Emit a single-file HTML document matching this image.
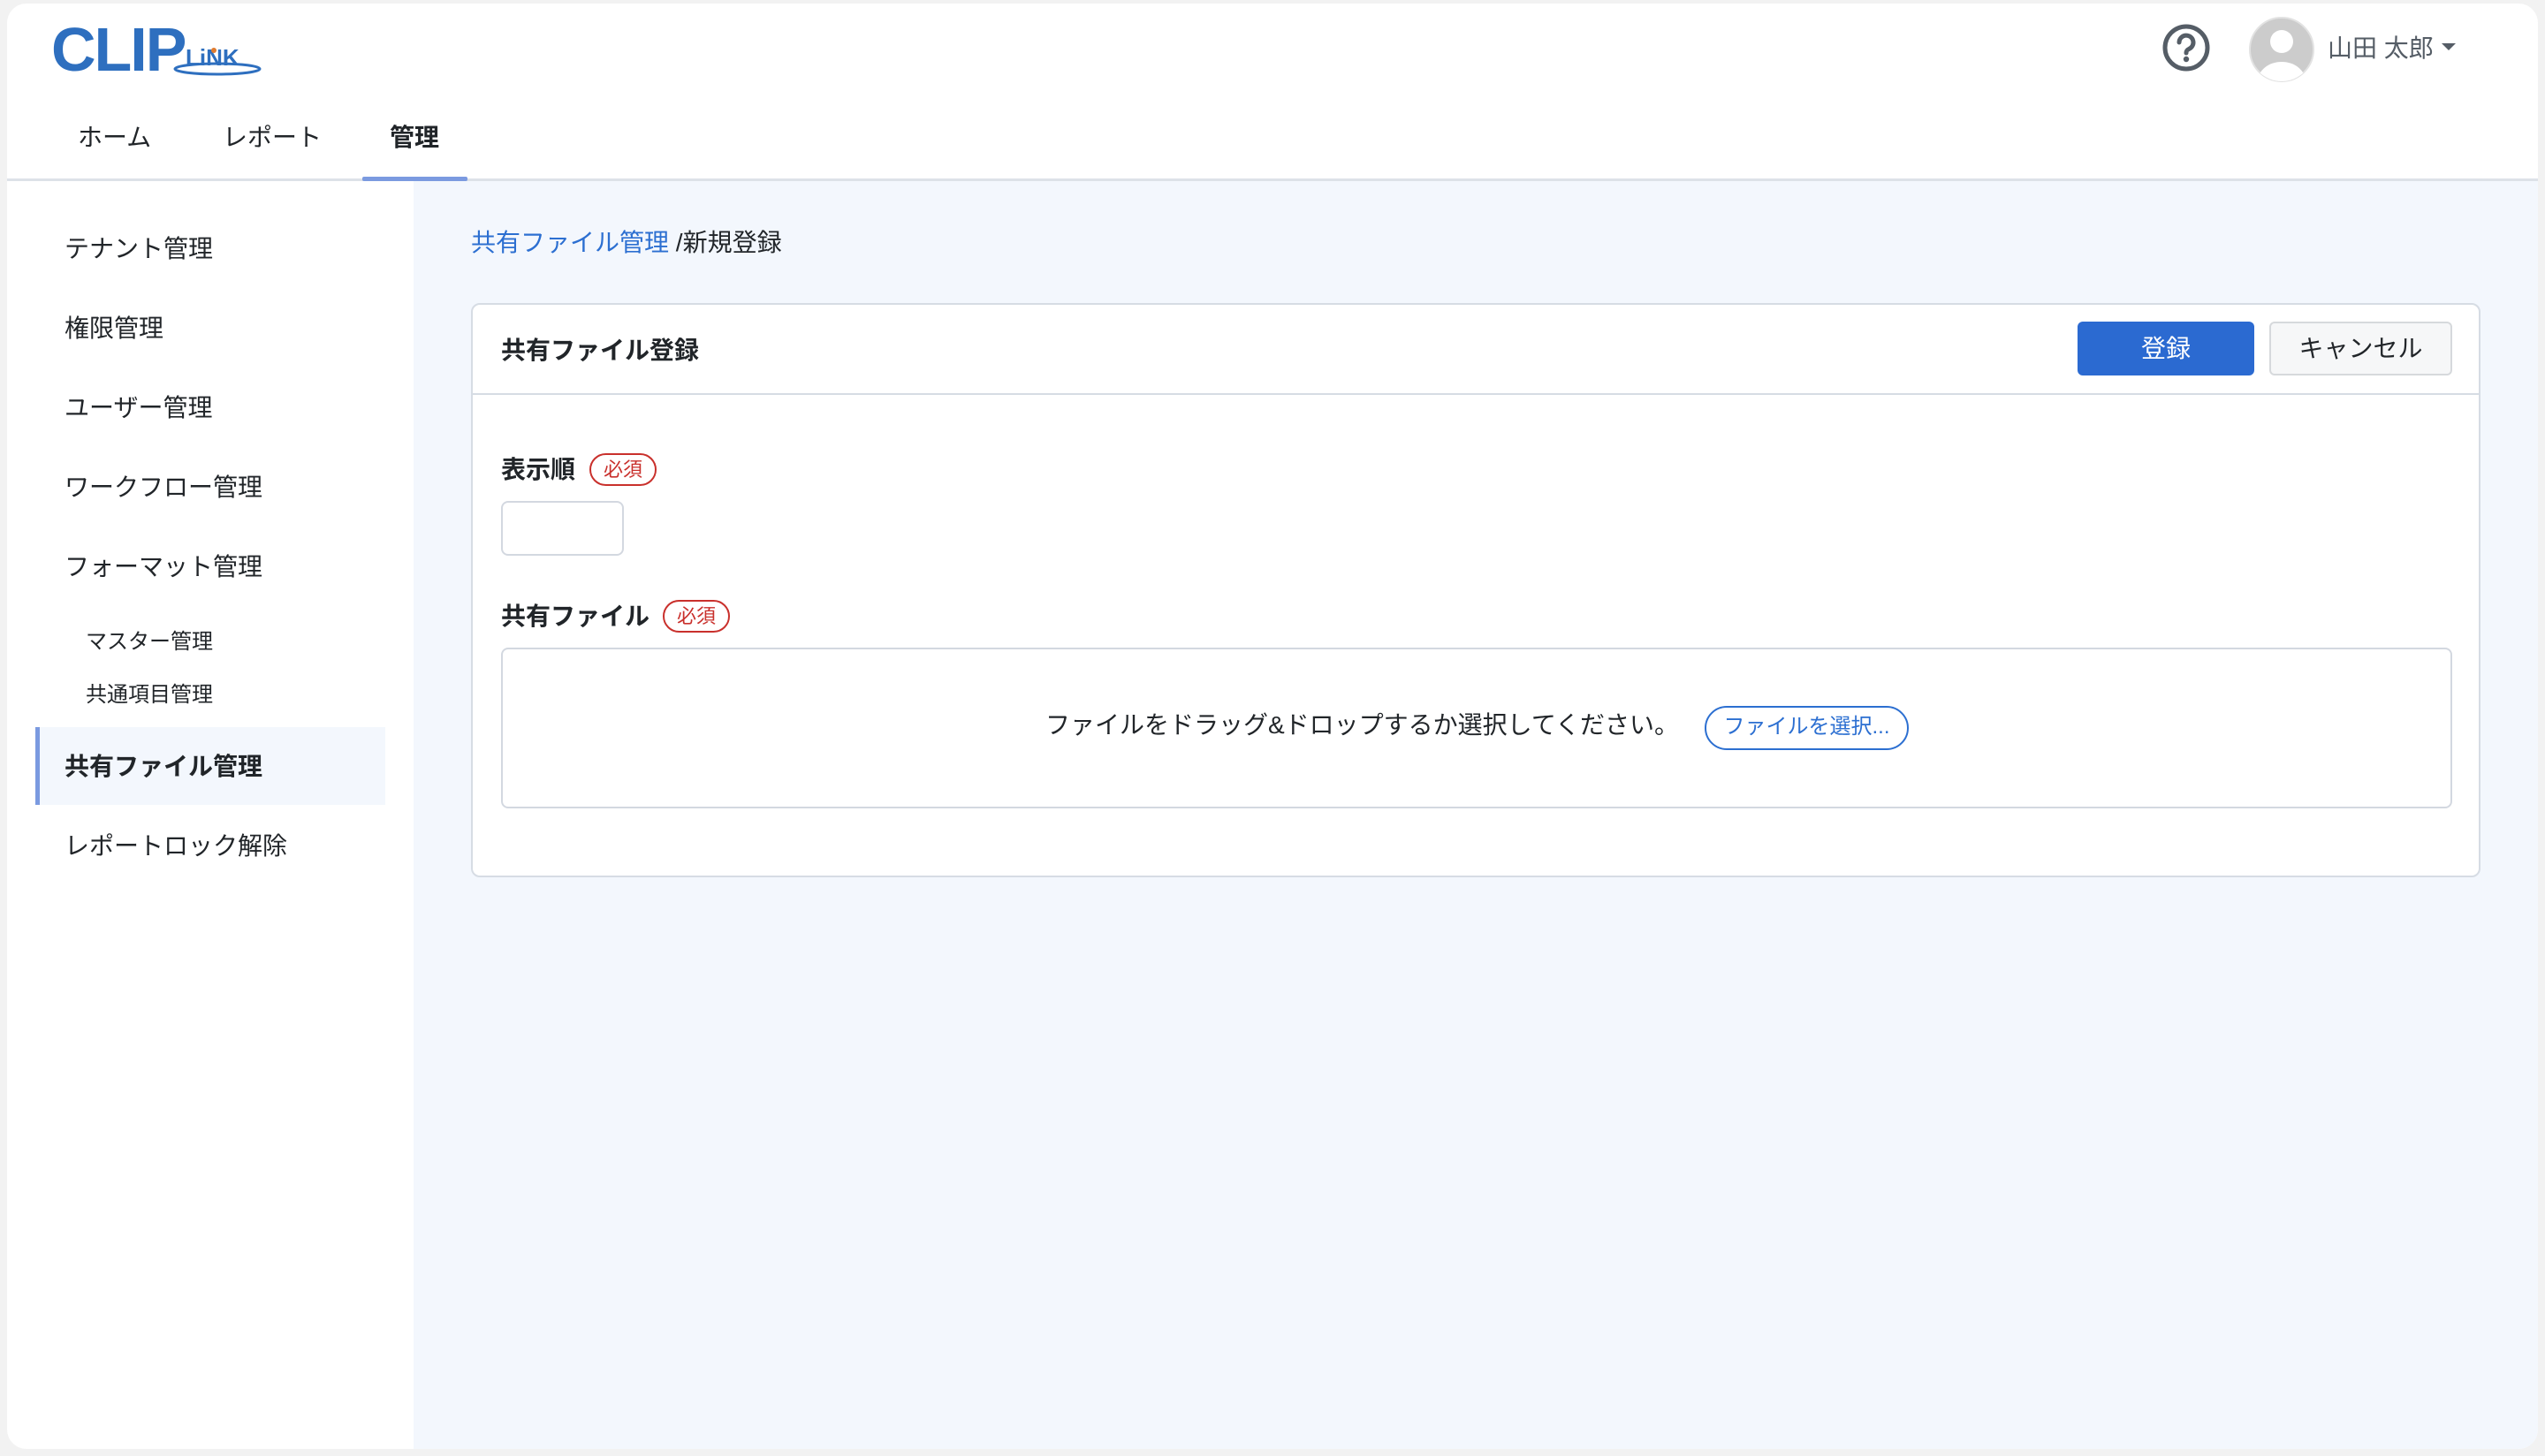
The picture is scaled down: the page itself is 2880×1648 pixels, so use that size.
<!DOCTYPE html>
<html><head><meta charset="utf-8"><style>
*{box-sizing:border-box;margin:0;padding:0}
body{width:2880px;height:1648px;background:#f2f2f2;font-family:"Liberation Sans","Noto Sans CJK JP",sans-serif;color:#212529;position:relative;overflow:hidden}
.frame{position:absolute;left:8px;top:4px;width:2864px;height:1636px;background:#fff;border-radius:22px;overflow:hidden}
.abs{position:absolute;white-space:nowrap}
.hdrline{position:absolute;left:0;top:198px;width:100%;height:3px;background:#dde2e8}
.main{position:absolute;left:460px;top:201px;right:0;bottom:0;background:#f3f7fd}
.nav{font-size:28px;top:130px;color:#212529}
.side{font-size:28px;left:65px}
.sub{font-size:24px;left:89px}
.card{position:absolute;left:65px;top:138px;width:2274px;height:650px;background:#fff;border:2px solid #d6dce4;border-radius:10px}
.badge{position:absolute;border:2.5px solid #c9302c;color:#c9302c;border-radius:20px;font-size:22px;line-height:33px;padding:0 14px}
</style></head><body>
<div class="frame">
  <div class="abs" style="left:50px;top:12px;font-size:70px;font-weight:bold;color:#2e6fbf;letter-spacing:-2px">CLIP</div>
  <svg class="abs" style="left:186px;top:60px" width="104" height="26"><ellipse cx="52" cy="14" rx="48" ry="6" fill="none" stroke="#2e6fbf" stroke-width="3"/></svg>
  <div class="abs" style="left:202px;top:46px;font-size:26px;font-weight:bold;color:#2e6fbf;background:transparent">LiNK</div>
  <div class="abs" style="left:231px;top:50px;width:6px;height:6px;border-radius:3px;background:#e07b2e"></div>
  <div class="abs nav" style="left:80px">ホーム</div>
  <div class="abs nav" style="left:244px">レポート</div>
  <div class="abs nav" style="left:433px;font-weight:bold">管理</div>
  <div class="abs" style="left:402px;top:196px;width:119px;height:5px;background:#7b9ae0;border-radius:2px;z-index:2"></div>
  <svg class="abs" style="left:2438px;top:22px" width="56" height="56" viewBox="0 0 56 56"><circle cx="28" cy="28" r="24" fill="none" stroke="#555d66" stroke-width="5"/><path d="M20 22a8 8 0 1 1 11 7.5c-2 1-3 2-3 4.5" fill="none" stroke="#555d66" stroke-width="5" stroke-linecap="round"/><circle cx="28" cy="41" r="3.2" fill="#555d66"/></svg>
  <svg class="abs" style="left:2536px;top:14px" width="76" height="76" viewBox="0 0 76 76"><defs><clipPath id="c"><circle cx="38" cy="38" r="36"/></clipPath></defs><circle cx="38" cy="38" r="36" fill="#cccccc" stroke="#e2e2e2" stroke-width="2"/><g clip-path="url(#c)"><circle cx="38" cy="29" r="13" fill="#fff"/><ellipse cx="38" cy="74" rx="27" ry="22" fill="#fff"/></g></svg>
  <div class="abs" style="left:2626px;top:29px;font-size:28px;color:#555d66">山田 太郎</div>
  <div class="abs" style="left:2755px;top:45px;width:0;height:0;border-left:8px solid transparent;border-right:8px solid transparent;border-top:8px solid #555d66"></div>
  <div class="hdrline"></div>
  <div class="abs side" style="top:256px">テナント管理</div>
  <div class="abs side" style="top:346px">権限管理</div>
  <div class="abs side" style="top:436px">ユーザー管理</div>
  <div class="abs side" style="top:526px">ワークフロー管理</div>
  <div class="abs side" style="top:616px">フォーマット管理</div>
  <div class="abs sub" style="top:702px">マスター管理</div>
  <div class="abs sub" style="top:762px">共通項目管理</div>
  <div class="abs" style="left:32px;top:819px;width:396px;height:88px;background:#f3f7fd;border-left:5px solid #7b9ae0"></div>
  <div class="abs side" style="top:842px;font-weight:bold">共有ファイル管理</div>
  <div class="abs side" style="top:932px">レポートロック解除</div>
  <div class="main">
    <div class="abs" style="left:65px;top:48px;font-size:28px"><span style="color:#2c6fd1">共有ファイル管理</span> /新規登録</div>
    <div class="card">
      <div class="abs" style="left:32px;top:30px;font-size:28px;font-weight:bold">共有ファイル登録</div>
      <div class="abs" style="left:1816px;top:19px;width:200px;height:61px;background:#2b6ad1;border-radius:6px;color:#fff;font-size:28px;text-align:center;line-height:61px">登録</div>
      <div class="abs" style="left:2033px;top:19px;width:207px;height:61px;background:#f6f7f8;border:2px solid #d6d9dc;border-radius:6px;font-size:28px;text-align:center;line-height:57px">キャンセル</div>
      <div class="abs" style="left:0;top:100px;width:100%;height:2px;background:#d6dce4"></div>
      <div class="abs" style="left:32px;top:165px;font-size:28px;font-weight:bold">表示順</div>
      <div class="badge" style="left:132px;top:168px">必須</div>
      <div class="abs" style="left:32px;top:222px;width:139px;height:62px;border:2px solid #d3d8e0;border-radius:8px"></div>
      <div class="abs" style="left:32px;top:331px;font-size:28px;font-weight:bold">共有ファイル</div>
      <div class="badge" style="left:215px;top:334px">必須</div>
      <div class="abs" style="left:32px;top:388px;width:2208px;height:182px;border:2px solid #d3d8e0;border-radius:8px">
        <div class="abs" style="left:614px;top:64px;font-size:28px">ファイルをドラッグ&amp;ドロップするか選択してください。</div>
        <div class="abs" style="left:1360px;top:64px;width:231px;height:50px;border:2.5px solid #2c6fd1;border-radius:25px;color:#2c6fd1;font-size:24px;text-align:center;line-height:44px">ファイルを選択...</div>
      </div>
    </div>
  </div>
</div>
</body></html>
